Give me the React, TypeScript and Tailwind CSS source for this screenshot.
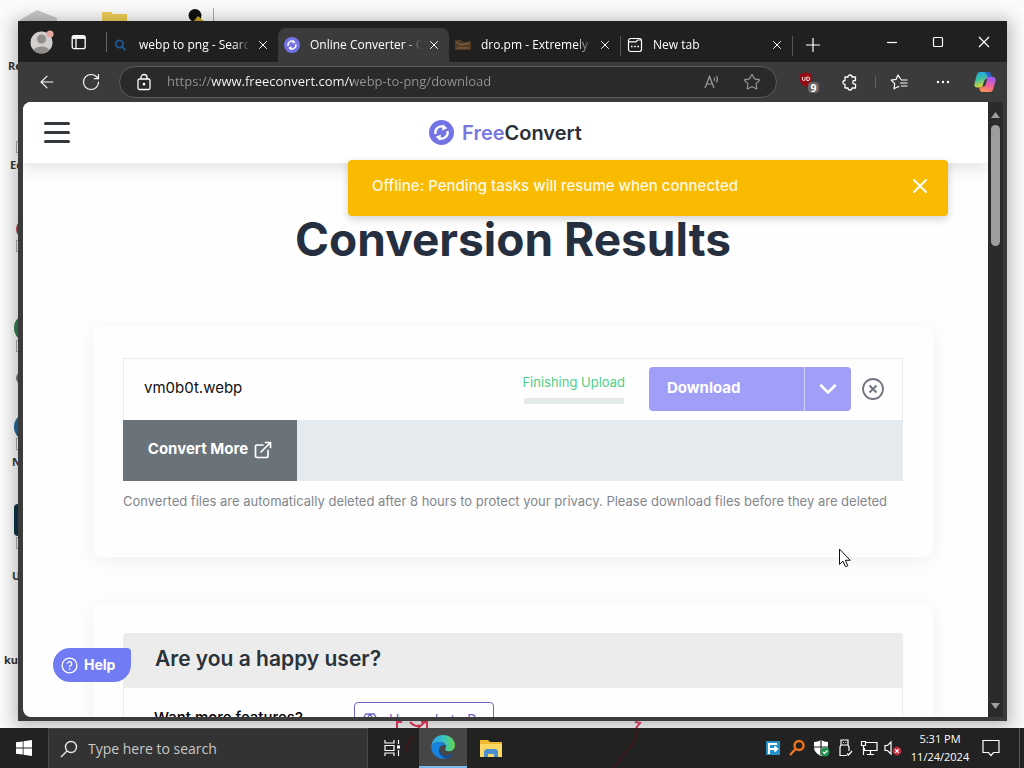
import React, { ReactNode } from "react";
import { ArrowLeft, ChevronDown, RotateCw, Star, X } from "lucide-react";

const UI = "font-['Open_Sans','Noto_Sans',sans-serif]";
const WEB = "font-['Inter','Liberation_Sans',sans-serif]";

function ConvertLogo({ className }: { className: string }) {
  return (
    <svg viewBox="0 0 26 26" className={className} aria-hidden="true">
      <circle cx="13" cy="13" r="13" fill="#7373e6" />
      <path d="M6.800 14.500a6.300 6.300 0 0 1 8.700-7.300" fill="none" stroke="#fff" strokeWidth="2.400" />
      <path d="M19.200 11.500a6.300 6.300 0 0 1-8.700 7.300" fill="none" stroke="#fff" strokeWidth="2.400" />
      <path d="M14.500 4.500 19 8.500l-5.500 2.500zM11.500 21.500 7 17.500l5.500-2.500z" fill="#fff" />
    </svg>
  );
}

function WorkspaceIcon() {
  return (
    <svg viewBox="0 0 16 16" className="size-4" fill="none" stroke="#fff" strokeWidth="1.300">
      <rect x="1.200" y="1.700" width="13" height="13" rx="2" />
      <path d="M1.500 3.500h12.500" strokeWidth="2.800" />
      <path d="M5 5v9.500" />
    </svg>
  );
}

function NewTabIcon() {
  return (
    <svg viewBox="0 0 16 16" className="size-4" fill="none" stroke="#fff" strokeWidth="1.200">
      <rect x="1.500" y="1.500" width="13" height="13" rx="2.200" />
      <path d="M1.500 4.800H9L10.500 3h4" />
      <path d="M4 9.500h1.600M7.200 9.500h1.600M10.400 9.500H12" strokeWidth="1.700" />
    </svg>
  );
}

function SearchFavicon() {
  return (
    <svg viewBox="0 0 16 16" className="size-4" fill="none" stroke="#1f5696" strokeWidth="1.900">
      <circle cx="6.500" cy="7" r="3.600" />
      <path d="m9.200 9.800 3.400 3.600" />
    </svg>
  );
}

function BoxFavicon() {
  return (
    <svg viewBox="0 0 16 16" className="size-4">
      <path d="M0 3h6l2 2 8-1v9H0z" fill="#513b25" />
      <path d="m1 5 5 3 9-2M2 11h12" stroke="#8a6a48" fill="none" />
    </svg>
  );
}

function Tab({ icon, title, active }: { icon: ReactNode; title: string; active?: boolean }) {
  return (
    <div className={"flex h-full w-[171px] min-w-0 items-center gap-2.5 pl-1.5 pr-2 " + (active ? "rounded-t-lg bg-[#3b3b3b]" : "")}>
      <span className="shrink-0">{icon}</span>
      <a
        href="#tab"
        className="-mr-1 min-w-0 flex-1 overflow-hidden whitespace-nowrap text-xs text-white [mask-image:linear-gradient(to_right,#000_86%,transparent)]"
      >
        {title}
      </a>
      <button aria-label={"Close " + title} className="shrink-0">
        <X className="size-3.5 text-white" strokeWidth={1.7} />
      </button>
    </div>
  );
}

function TabBar() {
  return (
    <div className="flex h-[41px] shrink-0 items-center bg-[#202020] pl-3">
      <button aria-label="Profile" className="mr-[17px]">
        <svg viewBox="0 0 24 24" className="size-6">
          <circle cx="11.500" cy="12.500" r="11" fill="#d2d0ce" />
          <circle cx="11.500" cy="9" r="4.600" fill="#8f8c8a" stroke="#b5b2b0" />
          <path d="M3.500 20a9 6.500 0 0 1 16 0 11 11 0 0 1-16 0z" fill="#908d8b" />
          <circle cx="20" cy="4" r="3.600" fill="#e6a9a0" />
        </svg>
      </button>
      <button aria-label="Tab actions">
        <WorkspaceIcon />
      </button>
      <div className="ml-[19px] h-5 w-px bg-[#666]" />
      <nav className="flex h-full min-w-0 flex-1 items-stretch pt-[7px]" aria-label="Tabs">
        <Tab icon={<SearchFavicon />} title="webp to png - Search" />
        <Tab active icon={<ConvertLogo className="size-4" />} title="Online Converter - C" />
        <Tab icon={<BoxFavicon />} title="dro.pm - Extremely S" />
        <div className="mt-2 h-5 w-px shrink-0 bg-[#555]" />
        <Tab icon={<NewTabIcon />} title="New tab" />
        <div className="mt-2 h-5 w-px shrink-0 bg-[#555]" />
        <button aria-label="New tab" className="ml-3">
          <svg viewBox="0 0 16 16" className="size-4" stroke="#fff" strokeWidth="1.200">
            <path d="M8 1v14M1 8h14" />
          </svg>
        </button>
      </nav>
      <div className="flex gap-[30px] pr-[15px]">
        <button aria-label="Minimize">
          <svg viewBox="0 0 16 16" className="size-4" stroke="#fff" strokeWidth="1.200">
            <path d="M3 8.500h10" />
          </svg>
        </button>
        <button aria-label="Maximize">
          <svg viewBox="0 0 16 16" className="size-4" fill="none" stroke="#fff" strokeWidth="1.200">
            <rect x="3.500" y="3.500" width="9" height="9" rx="1" />
          </svg>
        </button>
        <button aria-label="Close window">
          <svg viewBox="0 0 16 16" className="size-4" stroke="#fff" strokeWidth="1.300">
            <path d="m3 3 10 10M13 3 3 13" />
          </svg>
        </button>
      </div>
    </div>
  );
}

function CopilotIcon() {
  return (
    <svg viewBox="0 0 24 24" className="size-6">
      <defs>
        <linearGradient id="cpA" x1="0" y1="0" x2="0.300" y2="1">
          <stop offset="0" stopColor="#1fa2f0" />
          <stop offset="0.500" stopColor="#3cc0a0" />
          <stop offset="1" stopColor="#e5d32e" />
        </linearGradient>
        <linearGradient id="cpB" x1="0.500" y1="0" x2="0.200" y2="1">
          <stop offset="0" stopColor="#a45cf0" />
          <stop offset="0.500" stopColor="#f0609e" />
          <stop offset="1" stopColor="#ff9a4a" />
        </linearGradient>
      </defs>
      <path d="M7 2h8c2 0 2.500 1.200 3 3l.6 2H16c-2 0-2.700 1-3.200 2.600L11 15.500C10.500 17 9.500 17.500 8 17.500H4.500C2 17.500.800 16 1.600 13l2-7.500C4.400 3 5.200 2 7 2z" fill="url(#cpA)" />
      <path d="M12 2h3c2 0 2.500 1.200 3 3l.6 2H15z" fill="#2862c8" />
      <path d="M17 22H9.500c-2 0-2.500-1.200-3-3L6 17.500h2c1.500 0 2.500-.5 3-2l1.800-5.900C13.300 8 14 7 16 7h3.500c2.500 0 3.700 1.500 2.900 4.500l-2 7c-.7 2.500-1.600 3.500-3.400 3.500z" fill="url(#cpB)" />
      <path d="m11.800 9.500 2.600-.5-2.200 7-3 .8z" fill="#3b3b3b" />
    </svg>
  );
}

function Toolbar() {
  return (
    <div className="flex h-10 shrink-0 items-center bg-[#3b3b3b] pl-[19px] pr-2.5">
      <button aria-label="Back">
        <ArrowLeft className="size-5 text-white" strokeWidth={1.3} />
      </button>
      <button aria-label="Reload" className="ml-6">
        <RotateCw className="size-5 text-white" strokeWidth={1.4} />
      </button>
      <div className="ml-[18px] flex h-8 min-w-0 flex-1 items-center rounded-full border border-[#5c5c5c] bg-[#2a2a2a] px-[15px]">
        <svg viewBox="0 0 18 18" className="size-[18px] shrink-0" fill="none" stroke="#fff" strokeWidth="1.300">
          <rect x="3" y="6" width="12" height="10.500" rx="1.500" />
          <path d="M6 6V4.500a3 3 0 0 1 6 0V6" />
          <circle cx="9" cy="11.200" r="0.700" fill="#fff" />
        </svg>
        <input
          aria-label="Address"
          defaultValue="https://www.freeconvert.com/webp-to-png/download"
          className="ml-3.5 min-w-0 flex-1 bg-[linear-gradient(to_right,#949494_44px,#fff_44px,#fff_185px,#949494_185px)] bg-clip-text text-[13px] text-transparent outline-none"
        />
        <button aria-label="Read aloud" className="mr-[22px]">
          <svg viewBox="0 0 18 18" className="size-[18px]" fill="none" stroke="#a0a0a0" strokeWidth="1.200">
            <path d="M2 15 6.500 3.500 11 15M3.500 11h6" />
            <path d="M11 4.500q1.300 1.700 0 3.600M13.300 3q2.300 3 0 6.300" />
          </svg>
        </button>
        <button aria-label="Add to favorites">
          <Star className="size-[18px] text-[#9a9a9a]" strokeWidth={1.5} />
        </button>
      </div>
      <button aria-label="Content blocker, 9 blocked" className="ml-5">
        <svg viewBox="0 0 24 24" className="size-6">
          <path d="M9 2q3 2 6 2v6q0 4-6 7-6-3-6-7V4q3 0 6-2z" fill="#960c12" />
          <path d="M5.500 7v2.200q0 1.300 1.300 1.300t1.300-1.300V7M9.800 7v3.500h1.200q1.700 0 1.700-1.700T11 7z" fill="none" stroke="#fff" strokeWidth="0.900" />
          <rect x="11" y="12" width="11" height="11" rx="4" fill="#686868" />
          <text x="16.500" y="21.500" textAnchor="middle" fontSize="10.500" fontWeight="700" fill="#fff">9</text>
        </svg>
      </button>
      <button aria-label="Extensions" className="ml-5">
        <svg viewBox="0 0 18 18" className="size-[18px]" fill="none" stroke="#fff" strokeWidth="1.300" strokeLinejoin="round">
          <path d="M4 4h3a2 2 0 0 1 4 0h3.500v3.500h-1a1.800 1.800 0 0 0 0 3.600h1V15H11a2 2 0 0 1-4 0H4v-3.500a2 2 0 0 1 0-4z" />
        </svg>
      </button>
      <div className="ml-4 h-3 w-px bg-[#606060]" />
      <button aria-label="Favorites" className="ml-3.5">
        <svg viewBox="0 0 19 18" className="h-[18px] w-[19px]" fill="none" stroke="#fff" strokeWidth="1.200" strokeLinejoin="round">
          <path d="M11 6.500 8 2 6 6.400l-4.800.7 3.500 3.500L4 15.800l4.300-2.300 1 .6M11 7h6.500M10 10h7.500M11 13h6.500" />
        </svg>
      </button>
      <button aria-label="Settings and more" className="ml-[25px]">
        <svg viewBox="0 0 18 18" className="size-[18px]" fill="#fff">
          <circle cx="4" cy="9" r="1.200" />
          <circle cx="9" cy="9" r="1.200" />
          <circle cx="14" cy="9" r="1.200" />
        </svg>
      </button>
      <button aria-label="Copilot" className="ml-[21px]">
        <CopilotIcon />
      </button>
    </div>
  );
}

const cardClass = "rounded-lg bg-[#fefefe] px-[30px] shadow-[0_4px_20px_rgba(0,0,0,0.06)]";

function WebPage() {
  return (
    <div className={"relative flex min-w-0 flex-1 flex-col overflow-hidden rounded-l-lg bg-[#fefefe] " + WEB}>
      <header className="z-10 flex h-[61px] shrink-0 items-center bg-white px-[21px] shadow-[0_6px_14px_rgba(0,0,0,0.1)]">
        <button aria-label="Menu" className="flex w-[26px] flex-col gap-1.5">
          <span className="h-[3px] rounded bg-[#33383d]" />
          <span className="h-[3px] rounded bg-[#33383d]" />
          <span className="h-[3px] rounded bg-[#33383d]" />
        </button>
        <a href="#home" className="mr-[26px] flex flex-1 items-center justify-center gap-2 text-xl leading-6 font-semibold text-[#2b3036]">
          <ConvertLogo className="size-[25px]" />
          <span>
            <span className="text-[#7878e0]">Free</span>Convert
          </span>
        </a>
      </header>

      <main className="pl-[15px]">
        <h1 className="pt-[46px] text-center text-[46px] leading-[60px] font-bold text-[#252f3f]">Conversion Results</h1>
        <div className="mx-auto mt-[57px] flex max-w-[840px] flex-col gap-[46px]">
          <section className={cardClass + " pt-8 pb-[46px]"}>
            <div className="flex h-[62px] items-center border border-b-0 border-[#ececee] pr-[17px] pb-0.5 pl-5">
              <span className="flex-1 text-[15px] text-[#101010]">vm0b0t.webp</span>
              <div className="mr-6 flex flex-col items-center gap-2">
                <span className="text-[13px] leading-4 text-[#4fd08a]">Finishing Upload</span>
                <div className="h-1.5 w-[100px] bg-[#e4eaec]" />
              </div>
              <div className="flex h-11 w-[202px] rounded bg-[#a09ff8] text-white">
                <button className="flex-1 pl-[18px] text-left text-[15px] font-bold">Download</button>
                <button aria-label="Download options" className="flex w-[47px] items-center justify-center border-l border-[#d0d0fb]">
                  <ChevronDown className="size-7" strokeWidth={2.2} />
                </button>
              </div>
              <button aria-label="Remove file" className="ml-2.5">
                <svg viewBox="0 0 24 24" className="size-6" fill="none" stroke="#71757f">
                  <circle cx="12" cy="12" r="10" strokeWidth="1.800" />
                  <path d="m8.500 8.500 7 7M15.500 8.500l-7 7" strokeWidth="2" />
                </svg>
              </button>
            </div>
            <div className="flex h-[61px] bg-[#e4eaed]">
              <button className="flex w-[174px] items-center justify-center gap-1.5 bg-[#6a727a] pb-0.5 text-[15px] font-bold text-white">
                Convert More
                <svg viewBox="0 0 18 18" className="size-[18px]" fill="none" stroke="#fff" strokeWidth="1.700" strokeLinejoin="round" strokeLinecap="round">
                  <path d="M9 4H3a1.500 1.500 0 0 0-1.500 1.500V15A1.500 1.500 0 0 0 3 16.500h9.500A1.500 1.500 0 0 0 14 15V9.500M7 11l9.500-9.500M11.500 1.500h5v5" />
                </svg>
              </button>
            </div>
            <p className="mt-2.5 text-[13px] leading-5 whitespace-nowrap text-[#82868f]">
              Converted files are automatically deleted after 8 hours to protect your privacy. Please download files before they are deleted
            </p>
          </section>

          <section className={cardClass + " pt-[30px]"}>
            <h2 className="flex h-[55px] items-center rounded-t bg-[#ececec] px-8 pb-1 text-[21px] font-semibold text-[#2a323a]">
              Are you a happy user?
            </h2>
            <div className="flex items-start border-x border-[#ececee] px-[30px] pt-3.5">
              <span className="w-[200px] pt-1 text-[15px] leading-6 font-medium text-black">Want more features?</span>
              <button className="flex h-9 w-[140px] items-center gap-3 rounded border border-[#6c68c8] px-2 text-sm text-[#6c68c8]">
                <svg viewBox="0 0 14 14" className="size-3.5 shrink-0" fill="none" stroke="currentColor" strokeWidth="1.300">
                  <path d="M3 1h8l2.500 4L7 13 .500 5zM.500 5h13M4.500 5 7 12l2.500-7L7 1z" />
                </svg>
                <span className="whitespace-nowrap">Upgrade to Pro</span>
              </button>
            </div>
          </section>
        </div>
      </main>

      <div
        role="status"
        className="absolute top-[58px] right-10 z-20 flex h-14 w-[600px] items-center justify-between rounded bg-[#f8bb02] px-6 pb-1 text-[15px] font-medium text-[#fff8e2] shadow-[0_3px_8px_rgba(0,0,0,0.18)]"
      >
        Offline: Pending tasks will resume when connected
        <button aria-label="Dismiss" className="-mr-2">
          <X className="size-6 text-white" strokeWidth={2} />
        </button>
      </div>

      <button className="absolute bottom-[35px] left-[30px] z-20 flex h-[34px] w-[78px] items-center gap-1.5 rounded-tl-[17px] rounded-tr rounded-br-[17px] rounded-bl-[17px] bg-[#717bf3] pl-2 text-sm font-bold text-white">
        <svg viewBox="0 0 18 18" className="size-[17px]" fill="none" stroke="#fff" strokeWidth="1.400">
          <circle cx="9" cy="9" r="7.800" />
          <path d="M6.700 7.200A2.300 2.300 0 1 1 9.800 9.300Q9 9.700 9 10.800M9 12.200v1.500" />
        </svg>
        Help
      </button>
    </div>
  );
}

function Scrollbar() {
  return (
    <div className="flex w-[15px] shrink-0 flex-col items-center bg-[#2b2b2b] pt-2.5 pb-2">
      <svg viewBox="0 0 9 6" className="h-1.5 w-[9px]" fill="#a0a0a0">
        <path d="M4.500 0 9 6H0z" />
      </svg>
      <div className="mt-[7px] h-[121px] w-[9px] rounded-full bg-[#9d9d9d]" />
      <div className="flex-1" />
      <svg viewBox="0 0 9 6" className="h-1.5 w-[9px]" fill="#a0a0a0">
        <path d="M4.500 6 9 0H0z" />
      </svg>
    </div>
  );
}

function DesktopBackdrop() {
  return (
    <div className="absolute inset-0 overflow-hidden text-[11px] font-bold text-[#333]">
      <svg viewBox="0 0 240 24" className="absolute top-0 left-0 h-6 w-60">
        <path d="M20 20 37 10l20 8v4H20z" fill="#c9c9c9" />
        <path d="M102 12h9l2 2h14v10h-25z" fill="#f0cf55" />
        <circle cx="195" cy="15.500" r="6.500" fill="#111" />
        <path d="m193 22 5-6 7 6z" fill="#c9a52a" />
        <path d="M213.500 8v16" stroke="#aaa" />
      </svg>
      <span className="absolute top-[58px] left-2">Re</span>
      <span className="absolute top-[157px] left-2.5">Ed</span>
      <span className="absolute top-[454px] left-3">N</span>
      <span className="absolute top-[568px] left-3">U</span>
      <span className="absolute top-[652px] left-1">ku</span>
      <div className="absolute top-[219px] left-4 h-5 w-5 rounded-full bg-[#b6343c]" />
      <div className="absolute top-[314px] left-3.5 h-7 w-7 rounded-full bg-[#2f8049]" />
      <div className="absolute top-[372px] left-4 h-3 w-3 rounded-full bg-[#777]" />
      <div className="absolute top-[413px] left-3.5 h-7 w-7 rounded-full bg-[#20689c]" />
      <div className="absolute top-[504px] left-3.5 h-8 w-8 rounded bg-[#0c3446]" />
      <div className="absolute top-[141px] left-4 size-3 border border-[#aaa] bg-white" />
      <div className="absolute top-[240px] left-4 size-3 border border-[#aaa] bg-white" />
      <div className="absolute top-[340px] left-4 size-3 border border-[#aaa] bg-white" />
      <div className="absolute top-[438px] left-4 size-3 border border-[#aaa] bg-white" />
      <div className="absolute top-[537px] left-4 size-3 border border-[#aaa] bg-white" />
      <svg viewBox="0 0 260 10" className="absolute bottom-0 left-[390px] z-10 h-2.5 w-[260px]" fill="none" stroke="#c9324e" strokeWidth="2">
        <path d="M7 10V4h5M20 4q6 6 10 3M35 4l-7 6M31 4h6v6M245 4l5 1-4 5" />
      </svg>
    </div>
  );
}

function TrayIcon({ label, children }: { label: string; children: ReactNode }) {
  return (
    <button aria-label={label}>
      <svg viewBox="0 0 18 18" className="size-[18px]" fill="none" stroke="#fff" strokeWidth="1.200">
        {children}
      </svg>
    </button>
  );
}

function Taskbar() {
  return (
    <footer className="relative flex h-10 shrink-0 items-stretch bg-[#222] text-white">
      <svg viewBox="0 0 300 40" className="pointer-events-none absolute top-0 left-[390px] h-10 w-[300px]" fill="none" stroke="#3c1518" strokeWidth="2">
        <path d="M248 0q-2 12-10 22t-16 18M24 8q-10 8-6 18" />
      </svg>
      <button aria-label="Start" className="flex w-12 items-center justify-center">
        <svg viewBox="0 0 16 16" className="size-4" fill="#fff">
          <path d="M0 2.300 6.700 1.400v6.200H0zM7.500 1.300 16 0v7.600H7.500zM0 8.400h6.700v6.200L0 13.700zM7.500 8.400H16V16l-8.500-1.300z" />
        </svg>
      </button>
      <label className="flex w-80 items-center gap-2.5 border border-b-0 border-[#484848] bg-[#333] pl-[11px]">
        <svg viewBox="0 0 18 18" className="size-[18px] shrink-0" fill="none" stroke="#e6e6e6" strokeWidth="1.400">
          <circle cx="11" cy="7" r="5.500" />
          <path d="m7 11-6 6" />
        </svg>
        <input
          type="text"
          aria-label="Search"
          placeholder="Type here to search"
          className="min-w-0 flex-1 bg-transparent text-sm outline-none placeholder:text-[#c8c8c8]"
        />
      </label>
      <button aria-label="Task view" className="flex w-[51px] items-center justify-center pr-1">
        <svg viewBox="0 0 18 18" className="size-[18px]" fill="none" stroke="#fff" strokeWidth="1.200">
          <path d="M2 1v3h9V1M2 17v-3h9v3M2 6.500h9v5H2zM15.500 1v4M15.500 11v6" />
          <path d="M14 6.500h3v3h-3z" fill="#fff" stroke="none" />
        </svg>
      </button>
      <button aria-label="Microsoft Edge" className="flex w-12 items-center justify-center border-b-2 border-[#76b9ed] bg-[#464646]">
        <svg viewBox="0 0 24 24" className="size-6">
          <defs>
            <linearGradient id="edgeTop" x1="0" y1="0.500" x2="1" y2="0.500">
              <stop offset="0" stopColor="#2c9ee0" />
              <stop offset="0.500" stopColor="#36c2c9" />
              <stop offset="1" stopColor="#62d64e" />
            </linearGradient>
          </defs>
          <path d="M.300 11C1 4.500 6 0 12 0c7 0 12 4.800 12 10.300 0 3.500-2.600 6-6 6-2.500 0-4-.9-4-1.900 0-.7 1-1.200 1-3C15 9 12.500 7 9 7 5 7 1.500 8.800.300 11z" fill="url(#edgeTop)" />
          <path d="M.200 11.500C1.300 8.700 5 7 8.500 7c3 0 5.300 1.400 6 3.200C10.500 9.400 8 12 8 15c0 4.500 4 7.700 7.500 8.400A12 12 0 0 1 .200 11.500z" fill="#1682dc" />
          <path d="M9.600 12.500C7 18 12 21 16.500 20.500c2.500-.2 4.500-1.200 5.500-2-1.600 3-4.500 5-7 5C10.500 22.500 5 17 9.600 12.500z" fill="#0d4f9c" />
        </svg>
      </button>
      <button aria-label="File Explorer" className="flex w-12 items-center justify-center">
        <svg viewBox="0 0 22 20" className="h-5 w-[22px]">
          <path d="M0 2h8l2 2h12v15H0z" fill="#f0b92e" />
          <path d="M0 6h22v13H0z" fill="#fcd965" />
          <path d="M4 19v-6l2-2h10l2 2v6h-4v-3H8v3z" fill="#4a90cc" />
        </svg>
      </button>
      <div className="flex-1" />
      <div className="flex items-center gap-1.5">
        <TrayIcon label="File transfer">
          <rect x="2" y="2" width="14" height="14" fill="#2790c4" stroke="none" />
          <path d="M5 15V5h8M5 10h8M10.500 7.500 13 10l-2.500 2.500" strokeWidth="2" />
        </TrayIcon>
        <TrayIcon label="Everything search">
          <g stroke="#ef7420" strokeWidth="2.400">
            <circle cx="11" cy="6.500" r="4.500" />
            <path d="m7.500 10-5.500 6" />
          </g>
        </TrayIcon>
        <TrayIcon label="Windows Security">
          <path d="M9 1q3 2 7 2v5q0 6-7 9-7-3-7-9V3q4 0 7-2z" fill="#fff" stroke="none" />
          <path d="M9 1v15M2 8h14" stroke="#222" />
          <circle cx="13" cy="13" r="4.500" fill="#219451" stroke="none" />
          <path d="m11 13 1.500 1.500 3-3" />
        </TrayIcon>
        <TrayIcon label="Safely remove hardware">
          <path d="M5 6V1h7v5M7 3.500h.8M9.500 3.500h.8M11 16.500H4V8l1-2h7l1 2v4M11 14.500l1.500 1.500 3.500-4" />
        </TrayIcon>
        <TrayIcon label="Network">
          <path d="M6 3.500h11v8H4.500V9M10.500 12v3M7 15.500h7M1.500 2.500h4v4h-4zM3.500 7v9" />
        </TrayIcon>
        <TrayIcon label="Volume muted">
          <path d="M1 6.500h2.500L7 3v12l-3.500-3.500H1z" />
          <circle cx="13" cy="12" r="4.300" fill="#c8283c" stroke="none" />
          <path d="m11.200 10.200 3.600 3.600M14.800 10.200l-3.600 3.600" />
        </TrayIcon>
      </div>
      <button className="ml-1 flex w-[68px] flex-col items-center justify-center text-[11px] leading-[18px]">
        <span>5:31 PM</span>
        <span>11/24/2024</span>
      </button>
      <button aria-label="Notifications" className="mr-[19px] ml-2 flex items-center">
        <svg viewBox="0 0 18 18" className="size-[18px]" fill="none" stroke="#fff" strokeWidth="1.200">
          <path d="M1 1.500h16v12h-5.500L9 16.500l-2.500-3H1z" />
        </svg>
      </button>
      <div className="mr-1 w-px bg-[#555]" />
    </footer>
  );
}

export default function App() {
  return (
    <div className={"flex h-screen flex-col overflow-hidden " + UI}>
      <div className="relative flex min-h-0 flex-1 bg-[#fbfbfb] pt-[21px] pr-[17px] pb-[7px] pl-[18px]">
        <DesktopBackdrop />
        <div className="relative flex min-w-0 flex-1 flex-col bg-[#3b3b3b] shadow-[0_2px_16px_4px_rgba(0,0,0,0.25)]">
          <TabBar />
          <Toolbar />
          <div className="flex min-h-0 flex-1 pr-1 pb-1 pl-[5px]">
            <WebPage />
            <Scrollbar />
          </div>
        </div>
        <svg viewBox="0 0 14 20" className="absolute top-[548px] left-[838px] z-30 h-5 w-3.5">
          <path d="M1.500 1v15.500l3.500-3.300 2.500 5.500 2.300-1-2.400-5.400h4.800z" fill="#fff" stroke="#111" />
        </svg>
      </div>
      <Taskbar />
    </div>
  );
}
